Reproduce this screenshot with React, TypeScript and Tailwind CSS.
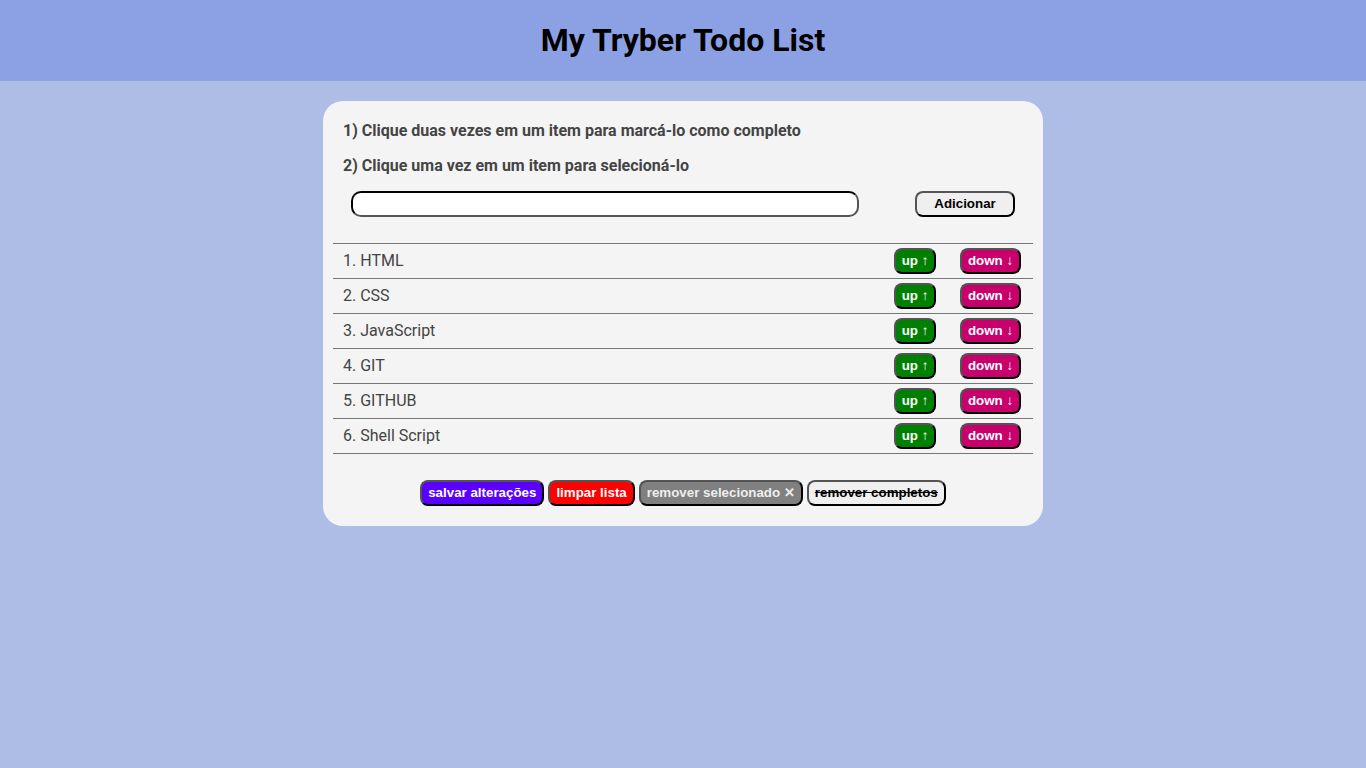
import React from "react";

const items = ["HTML", "CSS", "JavaScript", "GIT", "GITHUB", "Shell Script"];

const base =
  "h-[26px] rounded-[8px] border-2 border-[#000] text-[13.33px] font-bold leading-none whitespace-nowrap [border-style:outset] [font-family:'Liberation_Sans',Arial,sans-serif]";
const btn = `${base} px-[6px]`;

export default function App() {
  return (
    <div className="min-h-[768px] bg-[#aebde6] [font-family:Roboto,'Noto_Sans',sans-serif]">
      <header className="flex h-[81px] items-center justify-center bg-[#8ba1e3] pb-[2px]">
        <h1 className="text-[32px] font-bold text-black">My Tryber Todo List</h1>
      </header>
      <main className="flex justify-center pt-[20px]">
        <div className="w-[720px] rounded-[20px] bg-[#f4f4f4] px-[10px] pb-[20px] pt-[19px]">
          <p className="h-[21px] pl-[10px] text-[16px] font-bold leading-[21px] text-[#444]">
            1) Clique duas vezes em um item para marcá-lo como completo
          </p>
          <p className="mt-[14px] h-[21px] pl-[10px] text-[16px] font-bold leading-[21px] text-[#444]">
            2) Clique uma vez em um item para selecioná-lo
          </p>
          <div className="mt-[15px] flex items-center pl-[18px]">
            <input
              className="h-[26px] w-[508px] rounded-[10px] border-2 border-[#555] bg-white [border-style:inset]"
              type="text"
            />
            <button className={`ml-[56px] w-[100px] bg-[#efefef] text-black ${btn} rounded-[2px]`}>
              Adicionar
            </button>
          </div>
          <ol className="mt-[26px] border-b border-[#777]">
            {items.map((it, i) => (
              <li
                key={it}
                className="flex h-[35px] items-center border-t border-[#777] pl-[10px] pr-[12px] text-[16px] text-[#444]"
              >
                <span className="flex-1">
                  {i + 1}. {it}
                </span>
                <button className={`${base} h-[25px] w-[42px] px-0 bg-[#008000] text-white`}>up ↑</button>
                <button className={`${base} ml-[24px] h-[25px] w-[61px] px-0 bg-[#c8006c] text-white`}>down ↓</button>
              </li>
            ))}
          </ol>
          <div className="mt-[26px] flex justify-center gap-[4px]">
            <button className={`${btn} bg-[#5a00ff] text-white`}>salvar alterações</button>
            <button className={`${btn} bg-[#ff0000] text-white`}>limpar lista</button>
            <button className={`${btn} bg-[#808080] text-[#eee]`}>remover selecionado ✕</button>
            <button className={`${btn} bg-[#f0f0f0] text-black line-through`}>remover completos</button>
          </div>
        </div>
      </main>
    </div>
  );
}
